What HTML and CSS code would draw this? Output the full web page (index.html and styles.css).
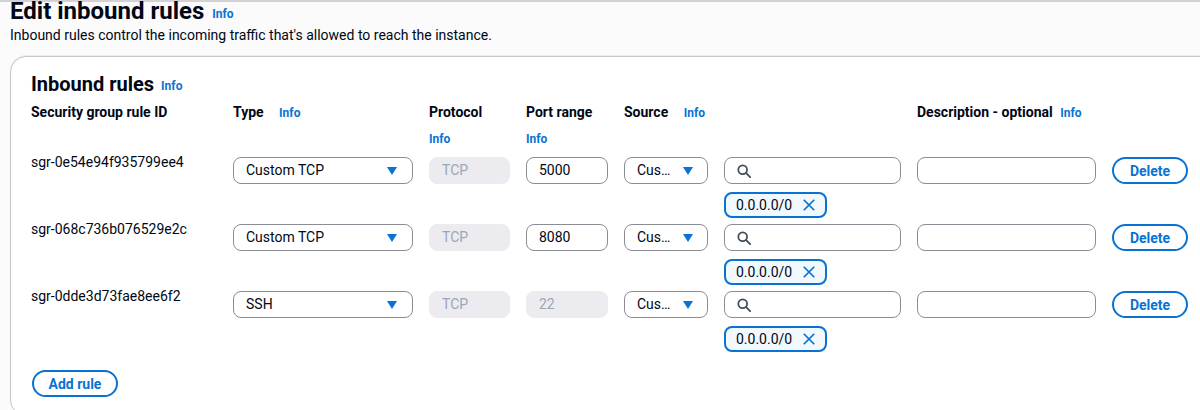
FILE: index.html
```html
<!DOCTYPE html>
<html>
<head>
<meta charset="utf-8">
<link rel="stylesheet" href="styles.css">
</head>
<body>
<div class="page">
  <header class="page-head">
    <h1 class="title">Edit inbound rules <a class="info info-lg">Info</a></h1>
    <p class="subtitle">Inbound rules control the incoming traffic that's allowed to reach the instance.</p>
  </header>
  <section class="card">
    <h2 class="card-title">Inbound rules <a class="info">Info</a></h2>
    <div class="grid">
      <div class="th">Security group rule ID</div>
      <div class="th">Type <a class="info sp">Info</a></div>
      <div class="th">Protocol<a class="info block">Info</a></div>
      <div class="th">Port range<a class="info block">Info</a></div>
      <div class="th">Source <a class="info sp">Info</a></div>
      <div class="th"></div>
      <div class="th">Description - optional <a class="info desc">Info</a></div>
      <div class="th"></div>

      <!-- row 1 -->
      <div class="rid">sgr-0e54e94f935799ee4</div>
      <div class="cell"><div class="select"><span>Custom TCP</span><span class="caret"></span></div></div>
      <div class="cell"><div class="input disabled">TCP</div></div>
      <div class="cell"><div class="input">5000</div></div>
      <div class="cell"><div class="select short"><span>Cus…</span><span class="caret"></span></div></div>
      <div class="cell">
        <div class="input search"><svg width="14" height="14" viewBox="0 0 16 16"><circle cx="6.5" cy="6.5" r="5" fill="none" stroke="#414d5c" stroke-width="2"/><path d="M10.2 10.2 L15 15" stroke="#414d5c" stroke-width="2" stroke-linecap="round"/></svg></div>
        <div class="token">0.0.0.0/0 <svg width="14" height="14" viewBox="0 0 16 16"><path d="M2 2 L14 14 M14 2 L2 14" stroke="#0972d3" stroke-width="2" fill="none"/></svg></div>
      </div>
      <div class="cell"><div class="input"></div></div>
      <div class="cell"><button class="btn">Delete</button></div>

      <!-- row 2 -->
      <div class="rid">sgr-068c736b076529e2c</div>
      <div class="cell"><div class="select"><span>Custom TCP</span><span class="caret"></span></div></div>
      <div class="cell"><div class="input disabled">TCP</div></div>
      <div class="cell"><div class="input">8080</div></div>
      <div class="cell"><div class="select short"><span>Cus…</span><span class="caret"></span></div></div>
      <div class="cell">
        <div class="input search"><svg width="14" height="14" viewBox="0 0 16 16"><circle cx="6.5" cy="6.5" r="5" fill="none" stroke="#414d5c" stroke-width="2"/><path d="M10.2 10.2 L15 15" stroke="#414d5c" stroke-width="2" stroke-linecap="round"/></svg></div>
        <div class="token">0.0.0.0/0 <svg width="14" height="14" viewBox="0 0 16 16"><path d="M2 2 L14 14 M14 2 L2 14" stroke="#0972d3" stroke-width="2" fill="none"/></svg></div>
      </div>
      <div class="cell"><div class="input"></div></div>
      <div class="cell"><button class="btn">Delete</button></div>

      <!-- row 3 -->
      <div class="rid">sgr-0dde3d73fae8ee6f2</div>
      <div class="cell"><div class="select"><span>SSH</span><span class="caret"></span></div></div>
      <div class="cell"><div class="input disabled">TCP</div></div>
      <div class="cell"><div class="input disabled">22</div></div>
      <div class="cell"><div class="select short"><span>Cus…</span><span class="caret"></span></div></div>
      <div class="cell">
        <div class="input search"><svg width="14" height="14" viewBox="0 0 16 16"><circle cx="6.5" cy="6.5" r="5" fill="none" stroke="#414d5c" stroke-width="2"/><path d="M10.2 10.2 L15 15" stroke="#414d5c" stroke-width="2" stroke-linecap="round"/></svg></div>
        <div class="token">0.0.0.0/0 <svg width="14" height="14" viewBox="0 0 16 16"><path d="M2 2 L14 14 M14 2 L2 14" stroke="#0972d3" stroke-width="2" fill="none"/></svg></div>
      </div>
      <div class="cell"><div class="input"></div></div>
      <div class="cell"><button class="btn">Delete</button></div>
    </div>
    <div class="actions"><button class="btn add">Add rule</button></div>
  </section>
</div>
</body>
</html>
```

FILE: styles.css
```css
* { box-sizing: border-box; }
html, body { margin: 0; padding: 0; }
body {
  background: #fbfbfb;
  font-family: Roboto, "Liberation Sans", Arial, sans-serif;
  color: #000716;
  overflow: hidden;
  width: 1200px;
  height: 410px;
}
.page {
  border-top: 2px solid #d2d2d6;
  height: 410px;
}
.page-head { padding: 0 0 0 10px; }
.title {
  margin: 0;
  font-size: 24px;
  line-height: 18px;
  height: 18px;
  font-weight: 700;
}
.info {
  color: #0972d3;
  font-size: 12px;
  font-weight: 700;
  text-decoration: none;
  line-height: 1;
}
.title .info, .card-title .info { line-height: 0; }
.info-lg { vertical-align: 1px; margin-left: 2px; }
.subtitle {
  margin: 5px 0 0 0;
  font-size: 14px;
  line-height: 20px;
  height: 20px;
}
.card {
  margin: 11px -40px 0 10px;
  background: #fff;
  border: 1px solid #c6c6cd;
  border-radius: 16px;
  padding: 15px 20px 0 20px;
  height: 360px;
  box-shadow: 0 -1px 1px rgba(0,0,0,0.06);
}
.card-title {
  margin: 0;
  font-size: 20px;
  line-height: 24px;
  height: 24px;
  font-weight: 700;
}
.card-title .info { vertical-align: 1px; margin-left: 2px; }
.grid {
  display: grid;
  grid-template-columns: 186px 180px 81px 82px 84px 177px 179px 76px;
  column-gap: 16px;
  row-gap: 0;
  margin-top: 6px;
}
.th {
  font-size: 14px;
  font-weight: 700;
  line-height: 20px;
  height: 50px;
}
.info.sp { margin-left: 12px; }
.info.desc { margin-left: 4px; }
.info.block { display: block; margin-top: 7px; line-height: 20px; }
.rid {
  font-size: 14px;
  line-height: 20px;
  height: 67px;
}
.cell {
  padding-top: 5px;
  height: 67px;
}
.input, .select {
  height: 27px;
  border: 1px solid #8c8c94;
  border-radius: 8px;
  font-size: 14px;
  line-height: 25px;
  padding: 0 12px;
  background: #fff;
}
.input.disabled {
  background: #ebebf0;
  border-color: #ebebf0;
  color: #9ba7b6;
}
.select {
  display: flex;
  justify-content: space-between;
  align-items: center;
  padding: 0 15px 0 12px;
}
.select.short { padding: 0 14px 0 12px; }
.caret {
  width: 0; height: 0;
  border-left: 5.5px solid transparent;
  border-right: 5.5px solid transparent;
  border-top: 8px solid #0972d3;
}
.search {
  display: flex;
  align-items: center;
  padding-left: 12px;
}
.token {
  margin-top: 8px;
  width: 103px;
  height: 26px;
  border: 2px solid #0972d3;
  border-radius: 8px;
  background: #f1f8fe;
  font-size: 14px;
  line-height: 22px;
  padding: 0 0 0 10px;
  display: flex;
  align-items: center;
  gap: 10px;
}
.btn {
  font-family: inherit;
  height: 27px;
  width: 76px;
  border: 2px solid #0972d3;
  border-radius: 20px;
  background: #fff;
  color: #0972d3;
  font-weight: 700;
  font-size: 14px;
  padding: 0;
  cursor: pointer;
}
.actions { margin-top: 17px; padding-left: 1px; }
.btn.add { width: 86px; }
```
